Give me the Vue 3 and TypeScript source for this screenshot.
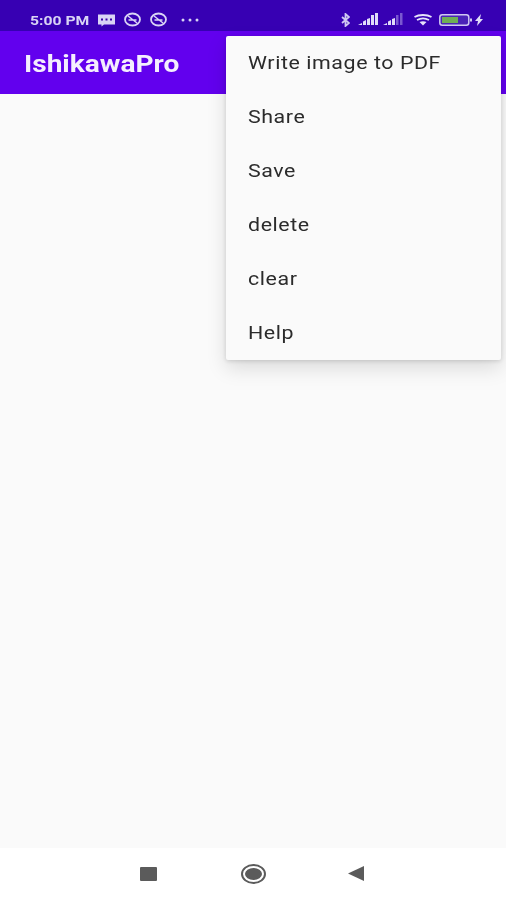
<script setup lang="ts">
const items: string[] = ['Write image to PDF', 'Share', 'Save', 'delete', 'clear', 'Help']
</script>

<template>
  <div class="phone">
    <div class="status">
      <div class="status-left">
        <span class="time">5:00 PM</span>
        <svg width="17" height="14" viewBox="0 0 17 14"><path d="M0 1.500h17v10H6l-2.500 2v-2H0z" fill="#d9d4f5"/><g fill="#3a00a8"><rect x="3" y="5.500" width="2" height="2"/><rect x="7.500" y="5.500" width="2" height="2"/><rect x="12" y="5.500" width="2" height="2"/></g></svg>
        <svg width="17" height="15" viewBox="0 0 17 15"><ellipse cx="8.500" cy="7.500" rx="7.500" ry="6" fill="none" stroke="#d9d4f5" stroke-width="1.800"/><path d="M4 4l9 7M4.500 8h8" stroke="#d9d4f5" stroke-width="1.500"/></svg>
        <svg width="17" height="15" viewBox="0 0 17 15"><ellipse cx="8.500" cy="7.500" rx="7.500" ry="6" fill="none" stroke="#d9d4f5" stroke-width="1.800"/><path d="M4 4l9 7M4.500 8h8" stroke="#d9d4f5" stroke-width="1.500"/></svg>
        <svg class="dots" width="18" height="4" viewBox="0 0 18 4"><g fill="#d9d4f5"><circle cx="2" cy="2" r="1.500"/><circle cx="9" cy="2" r="1.500"/><circle cx="16" cy="2" r="1.500"/></g></svg>
      </div>
      <div class="status-right">
        <svg class="bt" width="9" height="14" viewBox="0 0 9 14"><path d="M1 4l7 6-3.500 3V1L8 4l-7 6" fill="none" stroke="#cfc8f2" stroke-width="1.800"/></svg>
        <svg class="sig1" width="20" height="13" viewBox="0 0 20 13"><path d="M0 12l4-2v2zM5 12V8.500L8 7v5zM9 12V6l3-1v7zM13 12V2h3v10zM17 12V0h3v12z" fill="#e0dcf8"/></svg>
        <svg class="sig2" width="20" height="13" viewBox="0 0 20 13"><path d="M0 12l4-2v2zM5 12V8.500L8 7v5zM9 12V6l3-1v7z" fill="#e0dcf8"/><path d="M13 12V2h2.500v10zM17 12V0h2.500v12z" fill="#7a58d0"/></svg>
        <svg class="wifi" width="18" height="12" viewBox="0 0 18 12"><path d="M0.500 3C5 0.300 13 0.300 17.500 3M3 6c3.500-2 8.500-2 12 0" fill="none" stroke="#e6e3fa" stroke-width="1.800"/><path d="M5.500 8c2-1 5-1 7 0L9 11.500z" fill="#e6e3fa"/></svg>
        <svg class="battery" width="33" height="12" viewBox="0 0 33 12"><rect x="0.800" y="0.800" width="29" height="10.400" rx="2.500" fill="#4a22b8" stroke="#cfc8f2" stroke-width="1.500"/><rect x="3" y="3" width="16" height="6" fill="#6fae55"/><rect x="31" y="4.500" width="2" height="3" fill="#cfc8f2"/></svg>
        <svg class="bolt" width="8" height="12" viewBox="0 0 8 12"><path d="M6 0L0 7h3l-1 5 6-7H5z" fill="#e0dcf8"/></svg>
      </div>
    </div>

    <header class="appbar"><span class="title">IshikawaPro</span></header>
    <main class="content"></main>

    <nav class="navbar">
      <span class="nav-square"></span>
      <span class="nav-circle"></span>
      <svg width="16" height="15" viewBox="0 0 16 15"><path d="M16 0v15L0 7.500z" fill="#5b5b5b"/></svg>
    </nav>

    <div class="menu">
      <div v-for="item in items" :key="item" class="menu-item"><span class="menu-label">{{ item }}</span></div>
    </div>
  </div>
</template>

<style>
html, body { margin: 0; background: #fafafa; }
</style>

<style scoped>
.phone {
  position: relative;
  width: 506px;
  height: 900px;
  display: flex;
  flex-direction: column;
  overflow: hidden;
  background: #fafafa;
  font-family: Roboto, "Liberation Sans", sans-serif;
  filter: blur(0.5px);
}
.status {
  height: 31px;
  flex: none;
  box-sizing: border-box;
  background: #3700b3;
  display: flex;
  align-items: center;
  justify-content: space-between;
  padding: 8px 23px 0 30px;
  color: #d9d4f5;
}
.status-left, .status-right { display: flex; align-items: center; }
.status-left { gap: 9px; }
.time {
  width: 59px;
  font-size: 13.500px;
  font-weight: 700;
  white-space: nowrap;
  transform: scaleX(1.165);
  transform-origin: left center;
}
.dots { margin-left: 5px; }
.sig1 { margin-left: 8px; }
.sig2 { margin-left: 5px; }
.wifi { margin-left: 11px; }
.battery { margin-left: 7px; }
.bolt { margin-left: 3px; }
.appbar {
  height: 63px;
  flex: none;
  box-sizing: border-box;
  background: #6200ee;
  color: #f4eefe;
  display: flex;
  align-items: center;
  padding: 2px 0 0 24px;
}
.title {
  font-size: 24px;
  font-weight: 700;
  transform: scaleX(1.17);
  transform-origin: left center;
}
.content { flex: 1; }
.navbar {
  height: 52px;
  flex: none;
  background: #fff;
  display: flex;
  align-items: center;
  justify-content: center;
  padding: 0 2px 1px 0;
  box-sizing: border-box;
}
.nav-square {
  width: 17px;
  height: 14px;
  background: #5b5b5b;
  border-radius: 1px;
  margin-right: 86px;
}
.nav-circle {
  width: 17px;
  height: 12px;
  border-radius: 50%;
  background: #5b5b5b;
  border: 2px solid #fff;
  outline: 2px solid #5b5b5b;
  margin-right: 84px;
}
.menu {
  position: absolute;
  left: 226px;
  top: 36px;
  width: 275px;
  background: #fafafa;
  border-radius: 2px;
  box-shadow: 0 8px 20px rgba(0, 0, 0, 0.13), 0 1px 4px rgba(0, 0, 0, 0.14);
}
.menu-item {
  height: 54px;
  display: flex;
  align-items: center;
  padding-left: 22px;
  color: #2b2b2b;
}
.menu-label {
  font-size: 18.500px;
  letter-spacing: 0.500px;
  white-space: nowrap;
  transform: scaleX(1.155);
  transform-origin: left center;
}
</style>
